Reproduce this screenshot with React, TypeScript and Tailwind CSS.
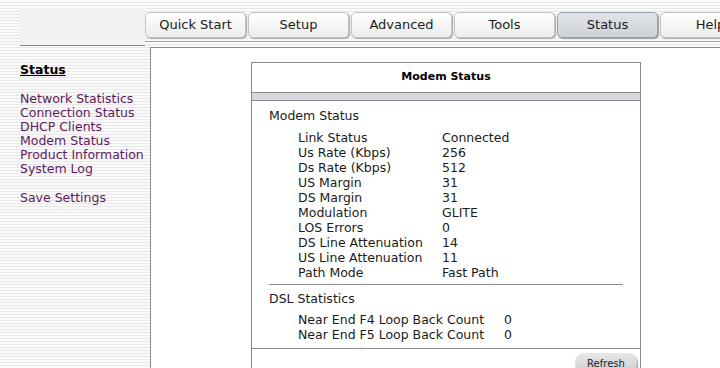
import React from "react";

const tabs = ["Quick Start", "Setup", "Advanced", "Tools", "Status", "Help"];
const links = [
  "Network Statistics",
  "Connection Status",
  "DHCP Clients",
  "Modem Status",
  "Product Information",
  "System Log",
];
const rows: [string, string][] = [
  ["Link Status", "Connected"],
  ["Us Rate (Kbps)", "256"],
  ["Ds Rate (Kbps)", "512"],
  ["US Margin", "31"],
  ["DS Margin", "31"],
  ["Modulation", "GLITE"],
  ["LOS Errors", "0"],
  ["DS Line Attenuation", "14"],
  ["US Line Attenuation", "11"],
  ["Path Mode", "Fast Path"],
];
const dsl: [string, string][] = [
  ["Near End F4 Loop Back Count", "0"],
  ["Near End F5 Loop Back Count", "0"],
];

export default function App() {
  return (
    <div className="w-[720px] h-[368px] overflow-hidden flex flex-col font-['DejaVu_Sans',sans-serif] text-[#1a1a1a] bg-[#f7f7f7] bg-[image:repeating-linear-gradient(to_bottom,#fafafa_0px,#fafafa_2px,#e8e8e8_2px,#e8e8e8_3px)]">
      {/* header */}
      <div className="h-[47px] flex shrink-0">
        <div className="w-[20px] shrink-0" />
        <div className="w-[125px] shrink-0 mt-[8px] h-[38px] bg-[#f2f2f2] border-b border-[#8a8a8a]" />
        <div className="flex-1 flex flex-col">
          <div className="h-[42px] flex gap-[2px] pt-[12px] border-b border-[#a0a0a0] overflow-hidden">
            {tabs.map((t) => (
              <div
                key={t}
                className={
                  t === "Status"
                    ? "w-[101px] h-[26px] shrink-0 rounded-[5px] border border-[#9ea3aa] bg-[#d3d6db] bg-[image:linear-gradient(to_bottom,#e2e5e9,#cdd1d7)] shadow-[1px_1px_1px_#9a9a9a] flex items-center justify-center text-[13px] text-[#1c1c1c]"
                    : "w-[101px] h-[26px] shrink-0 rounded-[5px] border border-[#c4c4c4] bg-[#f4f4f4] bg-[image:linear-gradient(to_bottom,#ffffff,#ececec)] shadow-[1px_1px_1px_#a8a8a8] flex items-center justify-center text-[13px] text-[#1c1c1c]"
                }
              >
                {t}
              </div>
            ))}
          </div>
        </div>
      </div>

      {/* body */}
      <div className="flex-1 flex min-h-0">
        <div className="w-[150px] shrink-0 pl-[20px] pt-[16px]">
          <div className="text-[12.5px] font-bold underline leading-[14px] text-black">Status</div>
          <div className="mt-[15px] flex flex-col">
            {links.map((l) => (
              <div key={l} className="text-[12.5px] leading-[14px] text-[#5e1a60]">
                {l}
              </div>
            ))}
          </div>
          <div className="mt-[15px] text-[12.5px] leading-[14px] text-[#5e1a60]">Save Settings</div>
        </div>

        <div className="flex-1 bg-white border-l border-t border-[#8a8a8a] pl-[100px] pt-[14px]">
          <div className="w-[390px] border-l border-r border-t border-[#8a8a8a] h-[400px] flex flex-col">
            <div className="h-[29px] flex items-center justify-center text-[11px] font-bold text-black">
              Modem Status
            </div>
            <div className="h-[9px] border-t border-b border-[#8a8a8a] bg-[#d5d8dd]" />
            <div className="pl-[17px] pr-[17px] pt-[7px]">
              <div className="text-[12.5px] leading-[15px]">Modem Status</div>
              <div className="mt-[7px] pl-[29px]">
                {rows.map(([k, v]) => (
                  <div key={k} className="flex text-[12.5px] leading-[15px]">
                    <div className="w-[144px] shrink-0">{k}</div>
                    <div>{v}</div>
                  </div>
                ))}
              </div>
              <div className="mt-[4px] border-t border-[#8a8a8a]" />
              <div className="mt-[6px] text-[12.5px] leading-[15px]">DSL Statistics</div>
              <div className="mt-[6px] pl-[29px]">
                {dsl.map(([k, v]) => (
                  <div key={k} className="flex text-[12.5px] leading-[15px]">
                    <div className="w-[206px] shrink-0">{k}</div>
                    <div>{v}</div>
                  </div>
                ))}
              </div>
            </div>
            <div className="mt-[6px] border-t border-[#8a8a8a] flex justify-end pr-[3px] pt-[4px]">
              <div className="w-[62px] h-[20px] rounded-[9px] bg-[#dcdcdc] bg-[image:linear-gradient(to_bottom,#e8e8e8,#cccccc)] shadow-[1px_1px_1px_#9a9a9a] flex items-center justify-center text-[10px] text-[#222]">
                Refresh
              </div>
            </div>
          </div>
        </div>
      </div>
    </div>
  );
}
